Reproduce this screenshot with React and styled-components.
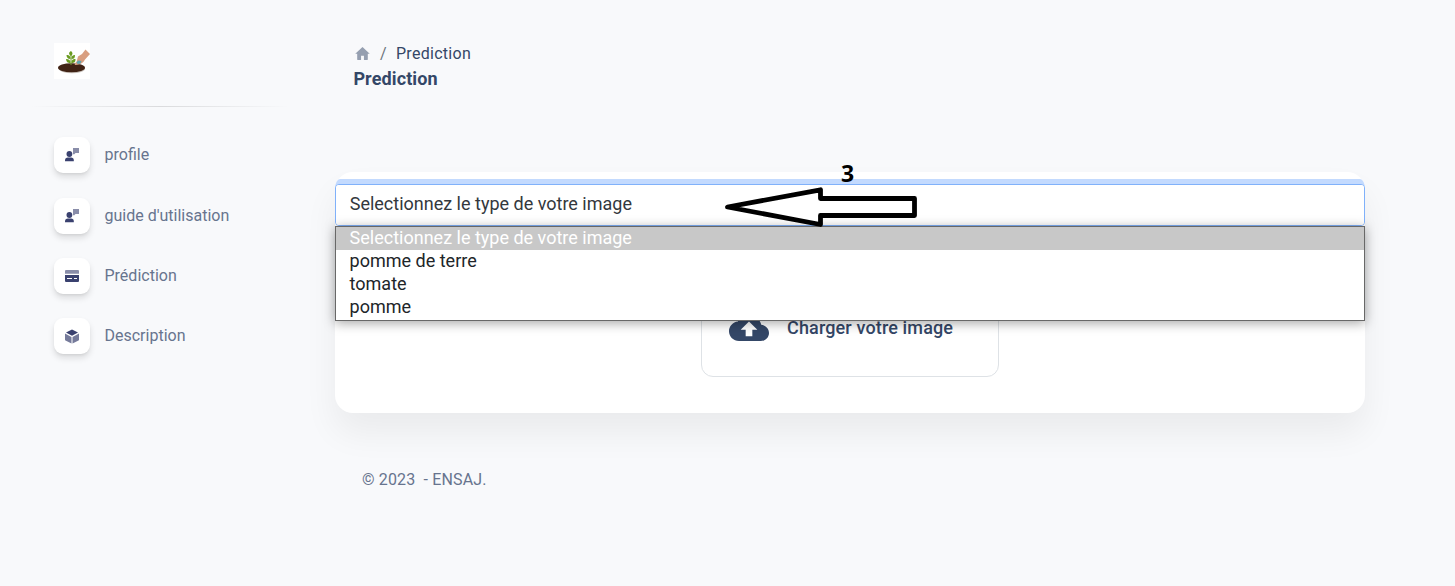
import React from "react";
import styled, { createGlobalStyle } from "styled-components";

const GlobalStyle = createGlobalStyle`
  *, *::before, *::after { box-sizing: border-box; }
  body { margin: 0; background: #f8f9fb; font-family: Roboto, sans-serif; font-size: 16px; line-height: 24px; color: #67748e; }
`;

const Page = styled.div`
  display: flex;
  height: 586px;
  overflow: hidden;
`;

const Sidebar = styled.aside`
  width: 260px;
  margin-left: 30px;
  flex: none;
  padding-top: 43px;
`;

const Brand = styled.div`
  width: 36px;
  height: 36px;
  margin-left: 24px;
  background: #fff;
  svg { display: block; }
`;

const Divider = styled.div`
  height: 1px;
  margin: 27px 0 30px;
  background: linear-gradient(90deg, transparent, rgba(0, 0, 0, 0.12), transparent);
`;

const Nav = styled.nav`
  display: flex;
  flex-direction: column;
  padding-left: 24px;
`;

const NavItem = styled.a`
  display: flex;
  align-items: center;
  height: 36px;
  gap: 14.5px;
  margin-bottom: ${(p) => p.$gap}px;
`;

const IconTile = styled.span`
  display: flex;
  align-items: center;
  justify-content: center;
  width: 36px;
  height: 36px;
  border-radius: 9px;
  background: #fff;
  box-shadow: 0 4px 6px rgba(20, 20, 20, 0.12), 0 2px 3px -1px rgba(20, 20, 20, 0.07);
`;

const Main = styled.main`
  flex: 1;
  padding: 42px 90px 0 45px;
`;

const Header = styled.header`
  height: 130px;
  padding-left: 18px;
`;

const Crumbs = styled.div`
  display: flex;
  align-items: center;
  height: 24px;
  color: #344767;
  letter-spacing: 0.28px;
  svg { margin: -1px 10px 0 2px; }
`;

const Slash = styled.span`
  width: 16px;
  color: #6c757d;
`;

const Title = styled.h6`
  margin: 0;
  font-size: 18px;
  line-height: 26px;
  font-weight: 700;
  letter-spacing: 0.12px;
  color: #344767;
  text-indent: 0.4px;
`;

const Card = styled.section`
  height: 241px;
  padding-top: 12px;
  border-radius: 18px;
  background: #fff;
  box-shadow: 0 20px 34px rgba(0, 0, 0, 0.058);
  isolation: isolate;
`;

const Select = styled.div`
  position: relative;
  height: 42px;
  padding: 0 14px;
  border: 1px solid #80b1fa;
  border-radius: 4px;
  background: #fff;
  font-size: 18px;
  line-height: 38px;
  color: #33383d;

  &::before {
    content: "";
    position: absolute;
    z-index: -1;
    left: -1px;
    right: -1px;
    top: -6px;
    height: 14px;
    border-radius: 5px 5px 0 0 / 10px 10px 0 0;
    background: #c3dafe;
  }
`;

const SelectValue = styled.div`
  height: 40px;
  margin: 0 -14px;
  padding-left: 13.7px;
  border-radius: 3px;
  background: #fff;
`;

const Menu = styled.div`
  position: absolute;
  z-index: 2;
  left: -1px;
  right: -1px;
  top: 41px;
  height: 95px;
  border: 1px solid #686868;
  background: #fff;
  box-shadow: 0 2px 11px rgba(0, 0, 0, 0.36);
`;

const Option = styled.div`
  height: 23px;
  padding-left: 13.6px;
  line-height: 22px;
  background: ${(p) => (p.$active ? "#c8c8c8" : "#fff")};
  color: ${(p) => (p.$active ? "#fff" : "#212529")};
`;

const Upload = styled.div`
  display: flex;
  align-items: flex-start;
  width: 298px;
  height: 99px;
  margin: 52px auto 0;
  padding: 37px 0 0 27px;
  gap: 18px;
  border: 1px solid #dee2e6;
  border-radius: 12px;
  font-size: 18px;
  font-weight: 500;
  letter-spacing: 0.14px;
  color: #344767;
  svg { margin-top: -1px; }
`;

const Footer = styled.footer`
  padding: 55px 0 0 27px;
  letter-spacing: 0.14px;
  white-space: pre;
`;

const Annotation = styled.div`
  position: absolute;
  z-index: 3;
  left: 720px;
  top: 160px;
  width: 200px;
  height: 70px;
  svg { position: absolute; left: 0; top: 0; }
`;

const Step = styled.b`
  position: absolute;
  left: 121px;
  top: -1px;
  font: 700 23px/28px "Open Sans", sans-serif;
  color: #000;
`;

const PlantLogo = () => (
  <svg width="36" height="36" viewBox="0 0 36 36">
    <ellipse cx="18" cy="26" rx="13" ry="4.2" fill="#c9c2bb" />
    <ellipse cx="17.5" cy="24.7" rx="13.5" ry="4.5" fill="#402315" />
    <path d="M17 22V9" stroke="#6f9a2b" strokeWidth="1" />
    <path d="M17 13c-3-2-2-4 0-5 2 2 2 3 0 5zM16.500 16c-3 0-4-2-4-4 3 0 4 1 4 4zM17.500 16c0-3 1-4 3.500-4 0 3-1 4-3.500 4zM16.500 20c-3 0-4-1-4.500-4 3 0 4.500 1 4.500 4zM17.500 20c0-3 1-4 4-4 0 3-1 4-4 4z" fill="#6a9b20" />
    <path d="M31.500 6.500l4.500 4.500-5 5.500c-2 4-5 5-9 5.500-2 0-1.500-2 .500-3l1.500-5.500 4-2.500z" fill="#d99f80" />
    <path d="M22.500 19l2-1.500 3 .500-1 2.500-3 .500z" fill="#5da5b0" />
  </svg>
);

const PersonIcon = () => (
  <svg width="14" height="14" viewBox="0 0 14 14" fill="#3a416f">
    <circle cx="4.400" cy="6" r="2.900" />
    <path d="M0 13.200v-1c0-1.700 1.300-2.600 2.800-2.600h3.300c1.600 0 2.700 1 2.700 2.600v1z" />
    <path d="M8 0h6v5H10.500L9 6.500 8 6z" opacity=".6" />
  </svg>
);

const CardIcon = () => (
  <svg width="14" height="12" viewBox="0 0 14 12" fill="#3a416f">
    <path d="M0 3.700V1q0-1 1-1h12q1 0 1 1v2.700z" opacity=".6" />
    <path fillRule="evenodd" d="M0 5h14v6q0 1-1 1H1q-1 0-1-1zM2 8v1h5V8zm7 0v1h3V8z" />
  </svg>
);

const BoxIcon = () => (
  <svg width="14" height="15" viewBox="0 0 14 15" fill="#3a416f">
    <path d="M1 3.600L7 .600l6 3-6 3.200z" />
    <path d="M0 4.600l6.500 3.300v6.600L.5 11.600Q0 11.300 0 10.700zM14 4.600L7.500 7.900v6.600l6-2.900q.5-.3.500-.9z" opacity=".7" />
  </svg>
);

const HomeIcon = () => (
  <svg width="15" height="13" viewBox="0 0 15 13.500" fill="#344767" opacity=".5">
    <path d="M7.500 0L15 7h-2v6q0 .500-.500.500H9V9H6v4.500H2.500Q2 13.500 2 13V7H0z" />
  </svg>
);

const CloudIcon = () => (
  <svg width="40" height="26" viewBox="0 0 24 16" preserveAspectRatio="none" fill="#344767">
    <path d="M19.350 6.040C18.670 2.590 15.640 0 12 0 9.110 0 6.600 1.640 5.350 4.040 2.340 4.360 0 6.910 0 10c0 3.310 2.690 6 6 6h13c2.760 0 5-2.240 5-5 0-2.640-2.050-4.780-4.650-4.960zM14 9v4h-4V9H7l5-5 5 5h-3z" />
  </svg>
);

const NAV = [
  ["profile", PersonIcon, 25],
  ["guide d'utilisation", PersonIcon, 24],
  ["Prédiction", CardIcon, 24],
  ["Description", BoxIcon, 0],
];

const OPTIONS = ["Selectionnez le type de votre image", "pomme de terre", "tomate", "pomme"];

export default function App() {
  return (
    <Page>
      <GlobalStyle />
      <Sidebar>
        <Brand><PlantLogo /></Brand>
        <Divider />
        <Nav>
          {NAV.map(([label, Icon, gap]) => (
            <NavItem key={label} $gap={gap}>
              <IconTile><Icon /></IconTile>
              <span>{label}</span>
            </NavItem>
          ))}
        </Nav>
      </Sidebar>
      <Main>
        <Header>
          <Crumbs><HomeIcon /><Slash>/</Slash>Prediction</Crumbs>
          <Title>Prediction</Title>
        </Header>
        <Card>
          <Select>
            <SelectValue>{OPTIONS[0]}</SelectValue>
            <Menu>
              {OPTIONS.map((o, i) => <Option key={o} $active={i === 0}>{o}</Option>)}
            </Menu>
          </Select>
          <Upload><CloudIcon /><span>Charger votre image</span></Upload>
        </Card>
        <Footer>{"© 2023  - ENSAJ."}</Footer>
      </Main>
      <Annotation>
        <Step>3</Step>
        <svg width="200" height="70" fill="#fff" stroke="#000" strokeWidth="4.800" strokeLinejoin="round">
          <path d="M7.500 47L100.500 29.800V38.500H194.500V55.500H100.500V64.500Z" />
        </svg>
      </Annotation>
    </Page>
  );
}
